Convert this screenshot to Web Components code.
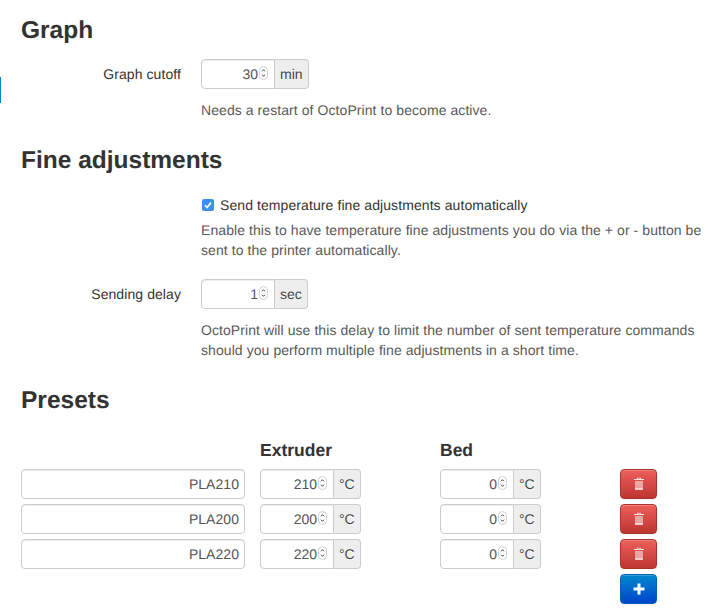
<!DOCTYPE html>
<html lang="en"><head><meta charset="utf-8"><title>Temperature settings</title>
<style>
html,body{margin:0;padding:0;background:#fff}
body{font:14px/20px "Liberation Sans",Arial,sans-serif;color:#333;overflow:hidden;text-rendering:geometricPrecision}
</style></head><body>
<x-page>
  <x-heading>Graph</x-heading>
  <x-row label="Graph cutoff"><x-num value="30" unit="min" w="74"></x-num></x-row>
  <x-help>Needs a restart of OctoPrint to become active.</x-help>
  <x-heading>Fine adjustments</x-heading>
  <x-check>Send temperature fine adjustments automatically</x-check>
  <x-help tight>Enable this to have temperature fine adjustments you do via the + or - button be sent to the printer automatically.</x-help>
  <x-row label="Sending delay" wide><x-num value="1" unit="sec" w="74"></x-num></x-row>
  <x-help>OctoPrint will use this delay to limit the number of sent temperature commands should you perform multiple fine adjustments in a short time.</x-help>
  <x-heading>Presets</x-heading>
  <x-presets>
    <x-preset name="PLA210" ext="210" bed="0"></x-preset>
    <x-preset name="PLA200" ext="200" bed="0"></x-preset>
    <x-preset name="PLA220" ext="220" bed="0"></x-preset>
  </x-presets>
</x-page>
<script>
function def(name, html, init){
  const t=document.createElement('template');t.innerHTML=html;
  customElements.define(name,class extends HTMLElement{
    connectedCallback(){
      if(this.shadowRoot)return;
      const r=this.attachShadow({mode:'open'});r.appendChild(t.content.cloneNode(true));
      if(init)init(this,r);
    }
  });
}
def('x-page',`<style>
:host{display:block;position:relative;height:613px;padding:10px 14px 0 21px;box-sizing:border-box;overflow:hidden}
.mark{position:absolute;left:0;top:77px;width:1px;height:26px;background:#0088cc}
</style><div class="mark"></div><slot></slot>`);
def('x-heading',`<style>
:host{display:block;font-size:24.5px;line-height:40px;height:39px;padding-top:1px;font-weight:bold;color:#333}
:host(:not(:first-child)){margin-top:20px}
</style><slot></slot>`);
def('x-row',`<style>
:host{display:flex;margin-top:9px;align-items:center}
:host([wide]){margin-top:19px}
.l{width:160px;text-align:right;color:#333;margin-right:20px;flex:none;font-size:14px;letter-spacing:.08px}
</style><div class="l"></div><slot></slot>`,(h,r)=>{r.querySelector('.l').textContent=h.getAttribute('label')});
def('x-help',`<style>
:host{display:block;margin:11px 0 0 180px;color:#595959;font-size:14px;line-height:20px;letter-spacing:.072px}
:host([tight]){margin-top:5px}
</style><slot></slot>`);
def('x-check',`<style>
:host{display:flex;align-items:center;margin:15px 0 0 181px;height:20px;color:#333;font-size:14px;letter-spacing:.085px}
.b{width:12px;height:12px;border-radius:2px;background:#3a8ff0;margin-right:6px;flex:none;display:block}
</style><svg class="b" viewBox="0 0 12 12"><path d="M3 6.200 5.100 8.500 9 3.600" fill="none" stroke="#fff" stroke-width="1.7"/></svg><slot></slot>`);
def('x-num',`<style>
:host{display:inline-flex;height:30px;box-sizing:border-box;color:#555;font-size:14px;flex:none}
.f{box-sizing:border-box;height:30px;border:1px solid #ccc;border-radius:4px 0 0 4px;background:#fff;display:flex;align-items:center;justify-content:flex-end;padding-right:6px;box-shadow:inset 0 1px 1px rgba(0,0,0,.075)}
.u{box-sizing:border-box;height:30px;border:1px solid #ccc;border-left:0;border-radius:0 4px 4px 0;background:#eee;display:flex;align-items:center;padding:0 5px;text-shadow:0 1px 0 #fff;color:#444}
svg{display:block;margin:-2px 0 0 1px}
</style><div class="f"><span class="v"></span><svg width="9" height="14" viewBox="0 0 9 14"><rect x=".5" y=".5" width="8" height="13" rx="4" fill="#fff" stroke="#d0d0d0"/><path d="M3 5.300 4.500 3.700 6 5.300M3 8.700 4.500 10.300 6 8.700" fill="none" stroke="#444" stroke-width="1"/></svg></div><div class="u"></div>`,
(h,r)=>{r.querySelector('.v').textContent=h.getAttribute('value');r.querySelector('.u').textContent=h.getAttribute('unit');r.querySelector('.f').style.width=h.getAttribute('w')+'px'});
def('x-presets',`<style>
:host{display:grid;grid-template-columns:239px 180px 180px 37px;row-gap:5px;margin-top:20px}
.h{font-size:17.5px;font-weight:bold;line-height:20px;color:#333;margin-bottom:4px}
</style><div class="h"></div><div class="h">Extruder</div><div class="h">Bed</div><div class="h"></div><slot></slot><div></div><div></div><div></div><x-btn kind="add"></x-btn>`);
def('x-preset',`<style>
:host{display:contents}
.n{box-sizing:border-box;width:224px;height:30px;border:1px solid #ccc;border-radius:4px;background:#fff;display:flex;align-items:center;justify-content:flex-end;padding-right:5px;color:#555;font-size:14px;letter-spacing:.05px;box-shadow:inset 0 1px 1px rgba(0,0,0,.075)}
</style><div class="n"></div><span class="a"></span><span class="c"></span><x-btn kind="del"></x-btn>`,
(h,r)=>{r.querySelector('.n').textContent=h.getAttribute('name');
  const mk=(v)=>{const e=document.createElement('x-num');e.setAttribute('w','74');e.setAttribute('unit','°C');e.setAttribute('value',v);return e};
  r.querySelector('.a').replaceWith(mk(h.getAttribute('ext')));
  r.querySelector('.c').replaceWith(mk(h.getAttribute('bed')));});
const trash=`<svg width="12" height="14" viewBox="0 0 12 14" fill="#fff"><path opacity=".85" d="M4.300 .8h3.400l.4 1.200H11v1H1V2h2.900zM4.900 1.400 4.700 2h2.600l-.2-.6z" fill-rule="evenodd"/><path opacity=".5" d="M2 4h8v8.200c0 .5-.4.8-.8.8H2.800c-.4 0-.8-.3-.8-.8z"/><path d="M2 11.400h8v1.100H2z" opacity=".85"/></svg>`;
const plus=`<svg width="12" height="12" viewBox="0 0 12 12" fill="#fff"><path d="M4.500 .5h3v4h4v3h-4v4h-3v-4h-4v-3h4z"/></svg>`;
def('x-btn',`<style>
:host{display:flex;align-items:center;justify-content:center;box-sizing:border-box;width:37px;height:30px;border-radius:4px;border:1px solid #a9352e;background:linear-gradient(#ee5f5b,#bd362f);box-shadow:inset 0 1px 0 rgba(255,255,255,.2),0 1px 2px rgba(0,0,0,.05)}
:host([kind=add]){border-color:#0560b5;background:linear-gradient(#0088cc,#0044cc)}
svg{display:block}
</style>`,(h,r)=>{r.appendChild(document.createRange().createContextualFragment(h.getAttribute('kind')==='add'?plus:trash))});
</script>
</body></html>
